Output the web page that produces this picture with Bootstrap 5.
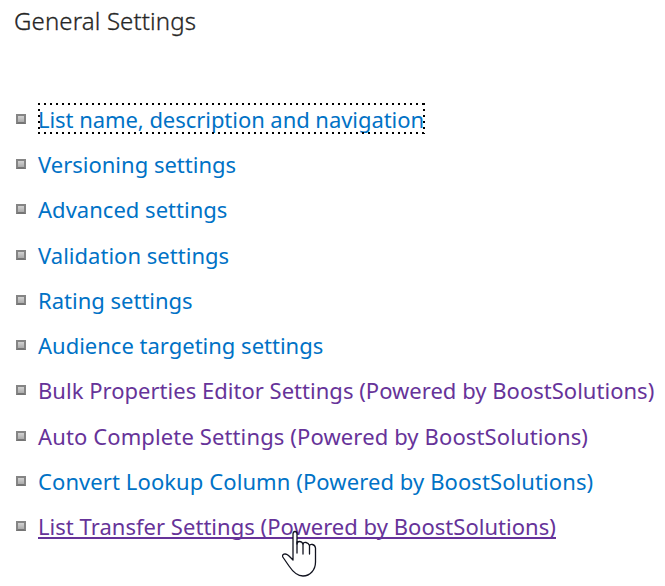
<!DOCTYPE html>
<html lang="en">
<head>
<meta charset="utf-8">
<meta name="viewport" content="width=device-width, initial-scale=1">
<title>General Settings</title>
<link href="https://cdn.jsdelivr.net/npm/bootstrap@5.3.0/dist/css/bootstrap.min.css" rel="stylesheet">
<style>
body{font-family:"Noto Sans","Open Sans",sans-serif;font-size:22px;background:#fff;overflow:hidden}
.page-title{font-size:24px;line-height:32px;font-weight:300;color:#262626;padding:5px 0 0 14px;letter-spacing:.13px;-webkit-text-stroke:.3px #262626}
.settings{margin-top:59.3px;padding-left:16px}
.settings li{height:45.25px;white-space:nowrap}
.settings a{color:#0072c6;line-height:30px;font-weight:400}
.settings a.visited{color:#663399}
.bullet{width:10px;height:10px;margin-right:12px;border:2px solid #858585;border-bottom-color:#757575;background:linear-gradient(#d2d2d2,#ababab)}
.focused{position:relative}
.focus-box{position:absolute;left:0;top:-2px;width:387px;height:32px}
.ls-a{letter-spacing:-.05px}.ls-b{letter-spacing:.02px}.ls-c{letter-spacing:.12px}.ls-d{letter-spacing:.09px}.ls-e{letter-spacing:.03px}
.hovered{background:linear-gradient(#663399,#663399) 0 26px/100% 2px no-repeat}
.pointer{position:absolute;left:281px;top:530px}
</style>
</head>
<body>
<h1 class="page-title mb-0">General Settings</h1>
<ul class="settings list-unstyled mb-0">
<li class="d-flex align-items-center"><span class="bullet"></span><a href="#" class="text-decoration-none focused ls-a">List name, description and navigation<svg class="focus-box" viewBox="0 0 387 32" fill="none" stroke="#000" stroke-width="2" stroke-dasharray="2 4"><path d="M0 2H387M0 31H387M1 1V32M386 1V32"/></svg></a></li>
<li class="d-flex align-items-center"><span class="bullet"></span><a href="#" class="text-decoration-none">Versioning settings</a></li>
<li class="d-flex align-items-center"><span class="bullet"></span><a href="#" class="text-decoration-none ls-b">Advanced settings</a></li>
<li class="d-flex align-items-center"><span class="bullet"></span><a href="#" class="text-decoration-none ls-b">Validation settings</a></li>
<li class="d-flex align-items-center"><span class="bullet"></span><a href="#" class="text-decoration-none">Rating settings</a></li>
<li class="d-flex align-items-center"><span class="bullet"></span><a href="#" class="text-decoration-none">Audience targeting settings</a></li>
<li class="d-flex align-items-center"><span class="bullet"></span><a href="#" class="text-decoration-none visited ls-b">Bulk Properties Editor Settings (Powered by BoostSolutions)</a></li>
<li class="d-flex align-items-center"><span class="bullet"></span><a href="#" class="text-decoration-none visited ls-c">Auto Complete Settings (Powered by BoostSolutions)</a></li>
<li class="d-flex align-items-center"><span class="bullet"></span><a href="#" class="text-decoration-none ls-d">Convert Lookup Column (Powered by BoostSolutions)</a></li>
<li class="d-flex align-items-center"><span class="bullet"></span><a href="#" class="text-decoration-none visited hovered ls-e">List Transfer Settings (Powered by BoostSolutions)</a></li>
</ul>
<svg class="pointer" width="38" height="48" viewBox="0 0 38 48" fill="#fff" stroke="#11131f" stroke-width="1.3" stroke-linejoin="round" stroke-linecap="round"><path d="M12 29V4Q12 1.500 14 1.500T16 4V14Q16 11.500 18.500 11.500T22 14Q22.500 12 25 12.500T28.500 15.500Q29 14 31.500 14.500T34.500 18V32C34.500 40 29 46 22 46C16 46 12 42 8 36L1.800 27Q1 25 3 24.200T7.500 25.500L12 30Z"/><path d="M16 12V23M22 14V24M28.500 16V24" fill="none"/></svg>
<script src="https://cdn.jsdelivr.net/npm/bootstrap@5.3.0/dist/js/bootstrap.bundle.min.js"></script>
</body>
</html>
